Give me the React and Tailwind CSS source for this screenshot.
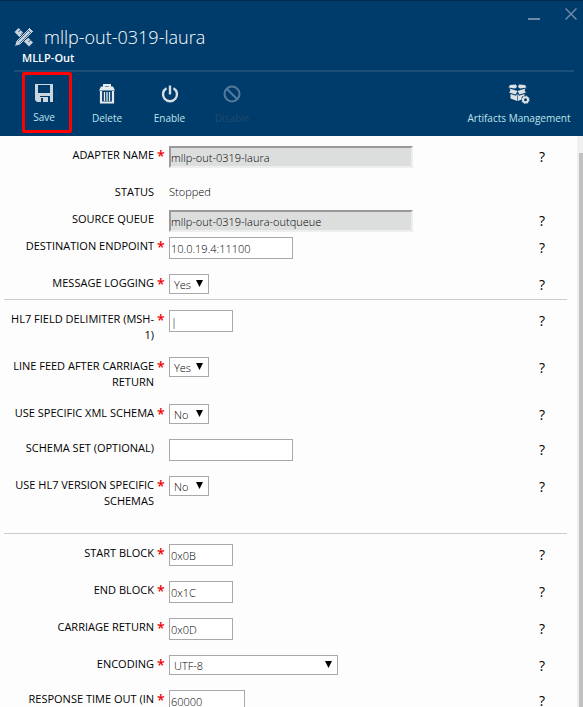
const cx = (...a) => a.filter(Boolean).join(' ');

function ToolsIcon() {
  return (
    <svg width="20" height="20" viewBox="0 0 20 20" aria-hidden="true">
      <path d="M4.5 1 L19 15.5 L15 19.5 L0.5 5 Z" fill="#c9d3dd" />
      <path d="M6.500 3 l-2 2 M9 5.500 l-2 2 M14 10.500 l-2 2 M16.500 13 l-2 2" stroke="#003c6b" strokeWidth="0.9" />
      <path d="M15.500 0.500 L19.500 4.500 L6 18 L0.500 19.500 L2 14 Z" fill="#c9d3dd" stroke="#003c6b" strokeWidth="1" />
      <path d="M3.500 14.500 L14.500 3.500 M5.500 16.500 L16.500 5.500 M13.500 2.500 L17.500 6.500" stroke="#003c6b" strokeWidth="0.7" />
    </svg>
  );
}

function SaveIcon() {
  return (
    <svg width="18" height="18" viewBox="0 0 18 18" fill="#cbd5de" aria-hidden="true">
      <path fillRule="evenodd" d="M0 0 H18 V18 H15 V12 H5 V18 H2 L0 16 Z M3 1 V9 H15 V1 Z" />
      <path fillRule="evenodd" d="M5 13 H13 V18 H5 Z M6 14 V18 H8 V14 Z" />
    </svg>
  );
}

function TrashIcon() {
  return (
    <svg width="16" height="20" viewBox="0 0 16 20" aria-hidden="true">
      <path d="M5 3 V1 H11 V3" fill="none" stroke="#e6ebf0" strokeWidth="2" />
      <path d="M2 2.500 H14 L16 6.500 H0 Z" fill="#e6ebf0" />
      <path d="M2 7 V18.5 H14 V7" fill="none" stroke="#e6ebf0" strokeWidth="2.200" />
      <path d="M5.5 8 V17 M8 8 V17 M10.5 8 V17" stroke="#e6ebf0" strokeWidth="1.300" />
    </svg>
  );
}

function PowerIcon() {
  return (
    <svg width="18" height="18" viewBox="0 0 18 18" fill="none" stroke="#d5dde5" strokeWidth="2.4" aria-hidden="true">
      <path d="M5.500 3.200 A7 7 0 1 0 12.500 3.200 M9 0.500 V9.500" />
    </svg>
  );
}

function BlockIcon() {
  return (
    <svg width="18" height="18" viewBox="0 0 18 18" fill="none" stroke="#537a9b" strokeWidth="2" aria-hidden="true">
      <circle cx="9" cy="9" r="7.5" />
      <path d="M3.5 3.5 L14.5 14.5" />
    </svg>
  );
}

function ArtifactsIcon() {
  return (
    <svg width="22" height="20" viewBox="0 0 22 20" fill="#dde2e6" aria-hidden="true">
      <path d="M2 1 L8 0.500 L9 3 L7 4.500 L0.500 3.500 Z M17 1 L11 0.500 L10 3 L12 4.500 L18.500 3.500 Z" />
      <path d="M1.500 4.500 L9.500 7 L7.500 10.500 L1 8.500 L2.500 6.500 Z M17.500 4.500 L9.500 7 L11.500 10.500 L18 8.500 L16.500 6.500 Z" />
      <path d="M2.500 10 L8 11.800 L9.200 9.500 L9.200 17 L2.500 14.500 Z M16.500 10 L11 11.800 L9.800 9.500 L9.800 17 L13 15.800 L14 12.500 L16.500 11.500 Z" />
      <circle cx="17.500" cy="15.800" r="2.500" fill="none" stroke="#dde2e6" strokeWidth="2" />
      <circle cx="17.500" cy="15.800" r="3.700" fill="none" stroke="#dde2e6" strokeWidth="1" strokeDasharray="1.500 1.400" />
    </svg>
  );
}

function Command({ icon, label, className, disabled }) {
  return (
    <button
      type="button"
      disabled={disabled}
      className={cx('flex flex-col items-center gap-1 text-[10px] leading-4', disabled ? 'text-[#1f4a70]' : 'text-[#bfe3ec]', className)}
    >
      <span className="flex h-6 items-center">{icon}</span>
      {label}
    </button>
  );
}

function Row({ id, label, required, tight, help = true, children }) {
  return (
    <div className={cx('flex items-start', tight ? 'pb-[5px]' : 'pb-[15px]')}>
      <label htmlFor={id} className="-mb-px w-[154px] shrink-0 pt-px pl-1 text-right text-[11px] leading-4">
        {label}
      </label>
      <span className="h-5 w-[15px] shrink-0 pl-[3px] text-[14px] leading-5 font-semibold text-[#f00000]">{required ? '*' : ''}</span>
      <div className="min-w-0 flex-1">{children}</div>
      {help && (
        <button type="button" aria-label={'Help: ' + label} className="mr-8 h-5 text-[14px] leading-[22px]">
          ?
        </button>
      )}
    </div>
  );
}

function TextField({ id, value, className, readOnly }) {
  return (
    <input
      id={id}
      type="text"
      defaultValue={value}
      readOnly={readOnly}
      className={cx(
        'block h-[22px] pt-px text-[11px] font-light outline-none',
        readOnly
          ? 'border-2 border-t-[#999] border-l-[#999] border-r-[#eee] border-b-[#eee] bg-[#dcdddd]'
          : 'border border-[#a9a9a9] bg-white pl-px',
        className,
      )}
    />
  );
}

function SelectField({ id, options, className }) {
  return (
    <div className={cx('relative', className)}>
      <select id={id} className="block h-5 w-full appearance-none border border-[#a9a9a9] bg-white pt-px pl-1 text-[11px] leading-4 font-light outline-none">
        {options.map((o) => (
          <option key={o}>{o}</option>
        ))}
      </select>
      <svg className="pointer-events-none absolute top-[6px] right-[6px]" width="7" height="7" viewBox="0 0 7 7" aria-hidden="true">
        <path d="M0 0 H7 L3.500 7 Z" fill="#000" />
      </svg>
    </div>
  );
}

export default function App() {
  return (
    <div className="flex h-screen flex-col overflow-hidden bg-[#fdfdfd] font-['Open_Sans','Noto_Sans',sans-serif] text-black">
      <header className="relative shrink-0 border-t border-[#002b50] bg-[#003c6b] pt-[23px] pb-[3px] text-white">
        <div className="absolute top-[7px] right-[6px] flex gap-[25px]">
          <button type="button" aria-label="Minimize" className="flex h-3 w-3 items-end">
            <span className="h-[2px] w-full bg-[#6b8ba6]" />
          </button>
          <button type="button" aria-label="Close">
            <svg width="12" height="12" viewBox="0 0 12 12" stroke="#6b8ba6" strokeWidth="1.500" aria-hidden="true">
              <path d="M0.500 0.500 L11.500 11.500 M11.500 0.500 L0.500 11.500" />
            </svg>
          </button>
        </div>
        <div className="flex items-center gap-[10px] pl-[14px]">
          <ToolsIcon />
          <h1 className="text-[18px] leading-[26px] font-light">mllp-out-0319-laura</h1>
        </div>
        <p className="pl-[22px] text-[11px] leading-4 font-semibold">MLLP-Out</p>
        <div className="mt-1 mr-[9px] ml-[14px] h-[2px] bg-[#1a4f7a]" />
        <div className="flex items-start pr-[9px] pl-[22px]">
          <Command icon={<SaveIcon />} label="Save" className="h-[61px] w-[50px] rounded-[2px] border-3 border-[#ff0000] pt-[6px] pr-[6px]" />
          <Command icon={<TrashIcon />} label="Delete" className="ml-[4px] w-[62px] pt-[10px]" />
          <Command icon={<PowerIcon />} label="Enable" className="w-[63px] pt-[10px]" />
          <Command icon={<BlockIcon />} label="Disable" disabled className="w-[62px] pt-[10px]" />
          <Command icon={<ArtifactsIcon />} label="Artifacts Management" className="ml-auto w-[110px] pt-[10px] whitespace-nowrap" />
        </div>
      </header>
      <div className="flex min-h-0 flex-1">
        <form className="min-w-0 flex-1 overflow-hidden pt-[10px]">
          <Row id="name" label="ADAPTER NAME" required>
            <TextField id="name" value="mllp-out-0319-laura" readOnly className="w-[244px]" />
          </Row>
          <div className="flex h-[27px] items-start text-[11px] leading-[18px]">
            <span className="w-[154px] text-right">STATUS</span>
            <span className="pl-[15px] font-light">Stopped</span>
          </div>
          <Row id="queue" label="SOURCE QUEUE" tight>
            <TextField id="queue" value="mllp-out-0319-laura-outqueue" readOnly className="w-[244px]" />
          </Row>
          <Row id="endpoint" label="DESTINATION ENDPOINT" required>
            <TextField id="endpoint" value="10.0.19.4:11100" className="w-[124px]" />
          </Row>
          <Row id="logging" label="MESSAGE LOGGING" required tight>
            <SelectField id="logging" options={['Yes', 'No']} className="w-10" />
          </Row>
          <hr className="mr-[10px] mb-[10px] ml-1 border-[#ccc]" />
          <Row id="delimiter" label="HL7 FIELD DELIMITER (MSH-1)" required>
            <TextField id="delimiter" value="|" className="w-16" />
          </Row>
          <Row id="linefeed" label="LINE FEED AFTER CARRIAGE RETURN" required>
            <SelectField id="linefeed" options={['Yes', 'No']} className="w-10" />
          </Row>
          <Row id="xml" label="USE SPECIFIC XML SCHEMA" required>
            <SelectField id="xml" options={['No', 'Yes']} className="w-10" />
          </Row>
          <Row id="set" label="SCHEMA SET (OPTIONAL)">
            <TextField id="set" value="" className="w-[124px]" />
          </Row>
          <Row id="hl7" label="USE HL7 VERSION SPECIFIC SCHEMAS" required>
            <SelectField id="hl7" options={['No', 'Yes']} className="w-10" />
          </Row>
          <hr className="mt-[10px] mr-[10px] mb-[10px] ml-1 border-[#ccc]" />
          <Row id="start" label="START BLOCK" required>
            <TextField id="start" value="0x0B" className="w-16" />
          </Row>
          <Row id="end" label="END BLOCK" required>
            <TextField id="end" value="0x1C" className="w-16" />
          </Row>
          <Row id="cr" label="CARRIAGE RETURN" required>
            <TextField id="cr" value="0x0D" className="w-16" />
          </Row>
          <Row id="encoding" label="ENCODING" required>
            <SelectField id="encoding" options={['UTF-8', 'ASCII']} className="w-[169px]" />
          </Row>
          <Row id="timeout" label="RESPONSE TIME OUT (IN SECONDS)" required>
            <TextField id="timeout" value="60000" className="w-[76px]" />
          </Row>
        </form>
        <div className="w-[6px] shrink-0 bg-[#f0f0f0] pt-[17px] pl-[2px]">
          <div className="h-full bg-[#c1c1c1]" />
        </div>
      </div>
    </div>
  );
}
